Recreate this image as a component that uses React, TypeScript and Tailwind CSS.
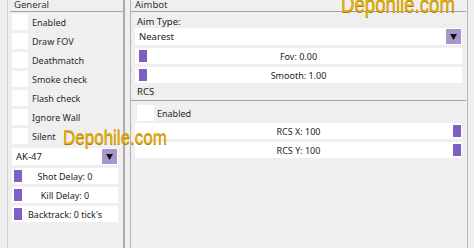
import React from 'react';

const font = "font-['Noto_Sans','Open_Sans',sans-serif]";

const Check: React.FC<{ label: string }> = ({ label }) => (
  <div className="flex h-[16px] items-center">
    <div className="h-[16px] w-[16px] bg-white" />
    <span className="ml-[4px] text-[9px] leading-none text-[#2a2a2a]">{label}</span>
  </div>
);

const Combo: React.FC<{ value: string; className?: string }> = ({ value, className }) => (
  <div className={`flex h-[17px] items-center bg-white ${className ?? ''}`}>
    <span className="flex-1 pl-[4px] text-[9.5px] leading-none text-[#222]">{value}</span>
    <div className="mr-[1px] flex h-[15px] w-[15px] items-center justify-center bg-[#a597cc]">
      <svg width="7" height="6" viewBox="0 0 7 6">
        <polygon points="0,0 7,0 3.5,6" fill="#111" />
      </svg>
    </div>
  </div>
);

const Slider: React.FC<{ label: string; side?: 'left' | 'right'; inset?: string }> = ({ label, side = 'left', inset = 'ml-[2px]' }) => (
  <div className="relative flex h-[16px] items-center justify-center bg-white">
    <div
      className={`absolute top-[2px] h-[12px] w-[8px] bg-[#7e5fc2] ${side === 'left' ? `left-0 ${inset}` : 'right-0 mr-[1px]'}`}
    />
    <span className="text-[9px] leading-none text-[#222]">{label}</span>
  </div>
);

const Header: React.FC<{ title: string }> = ({ title }) => (
  <div className="flex h-[12px] items-end border-b border-[#a3a3a3]">
    <span className="-mb-[1px] pl-[4px] text-[9.5px] leading-[14px] text-[#333]">{title}</span>
  </div>
);

export default function App() {
  return (
    <div className={`relative flex h-[248px] w-[474px] overflow-hidden bg-[#efefef] ${font}`}>
      {/* General */}
      <div className="ml-[7px] flex h-full w-[118px] flex-col border-l border-r-2 border-l-[#d0d0d0] border-r-[#acacac]">
        <div className="pl-[2px]">
          <Header title="General" />
        </div>
        <div className="flex flex-col pl-[4px] pr-[5px] pt-[2px]">
          <div className="flex flex-col gap-[3px]">
            <Check label="Enabled" />
            <Check label="Draw FOV" />
            <Check label="Deathmatch" />
            <Check label="Smoke check" />
            <Check label="Flash check" />
            <Check label="Ignore Wall" />
            <Check label="Silent" />
          </div>
          <Combo value="AK-47" className="mt-[4px]" />
          <div className="mt-[3px] flex flex-col gap-[3px]">
            <Slider label="Shot Delay: 0" />
            <Slider label="Kill Delay: 0" />
            <Slider label="Backtrack: 0 tick's" />
          </div>
        </div>
      </div>

      {/* Aimbot */}
      <div className="ml-[5px] flex h-full w-[338px] flex-col border-l border-r border-[#b4b4b4]">
        <div className="pr-[1px]">
          <Header title="Aimbot" />
        </div>
        <div className="flex flex-col pl-[4px] pr-[5px]">
          <div className="flex h-[16px] items-end pl-[2px]">
            <span className="text-[9.5px] leading-[12px] text-[#222]">Aim Type:</span>
          </div>
          <Combo value="Nearest" />
          <div className="mt-[3px] flex flex-col gap-[3px]">
            <Slider label="Fov: 0.00" inset="ml-[4px]" />
            <Slider label="Smooth: 1.00" inset="ml-[4px]" />
          </div>
        </div>
        <div className="mt-[1px] flex h-[17px] items-center border-b border-[#a3a3a3] pl-[6px] mr-[1px]">
          <span className="text-[9.5px] leading-none text-[#222]">RCS</span>
        </div>
        <div className="flex flex-col pl-[4px] pr-[5px] pt-[4px]">
          <div className="flex h-[16px] items-center pl-[2px]">
            <div className="h-[16px] w-[17px] bg-white" />
            <span className="ml-[3px] text-[9px] leading-none text-[#2a2a2a]">Enabled</span>
          </div>
          <div className="mt-[2px] flex flex-col gap-[3px]">
            <Slider label="RCS X: 100" side="right" />
            <Slider label="RCS Y: 100" side="right" />
          </div>
        </div>
      </div>

      {/* watermarks */}
      <span className="pointer-events-none absolute left-[341px] top-[-7px] origin-left scale-x-[0.81] whitespace-nowrap font-['Liberation_Sans',sans-serif] text-[23px] leading-none text-[#e3ad0b] [text-shadow:0_1px_0_#a87a00]">
        Depohile.com
      </span>
      <span className="pointer-events-none absolute left-[63px] top-[127px] origin-left scale-x-[0.85] whitespace-nowrap font-['Liberation_Sans',sans-serif] text-[20px] leading-none text-[#e3ad0b] [text-shadow:0_1px_0_#a87a00]">
        Depohile.com
      </span>
    </div>
  );
}
